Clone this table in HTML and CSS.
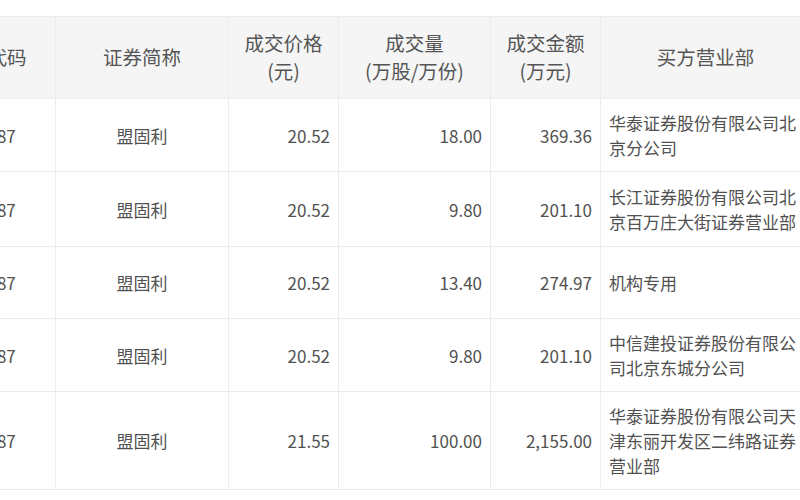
FILE: index.html
```html
<!DOCTYPE html>
<html lang="zh-CN">
<head>
<meta charset="utf-8">
<title>大宗交易</title>
<link rel="stylesheet" href="styles.css">
</head>
<body>
<table class="trades">
  <colgroup>
    <col class="c-code">
    <col class="c-name">
    <col class="c-price">
    <col class="c-vol">
    <col class="c-amt">
    <col class="c-buyer">
  </colgroup>
  <thead>
    <tr>
      <th>证券代码</th>
      <th>证券简称</th>
      <th>成交价格<br>(元)</th>
      <th>成交量<br>(万股/万份)</th>
      <th>成交金额<br>(万元)</th>
      <th>买方营业部</th>
    </tr>
  </thead>
  <tbody>
    <tr class="tight">
      <td class="code">301487</td>
      <td class="name">盟固利</td>
      <td class="num">20.52</td>
      <td class="num">18.00</td>
      <td class="num">369.36</td>
      <td class="buyer">华泰证券股份有限公司北京分公司</td>
    </tr>
    <tr>
      <td class="code">301487</td>
      <td class="name">盟固利</td>
      <td class="num">20.52</td>
      <td class="num">9.80</td>
      <td class="num">201.10</td>
      <td class="buyer">长江证券股份有限公司北京百万庄大街证券营业部</td>
    </tr>
    <tr>
      <td class="code">301487</td>
      <td class="name">盟固利</td>
      <td class="num">20.52</td>
      <td class="num">13.40</td>
      <td class="num">274.97</td>
      <td class="buyer">机构专用</td>
    </tr>
    <tr class="tight">
      <td class="code">301487</td>
      <td class="name">盟固利</td>
      <td class="num">20.52</td>
      <td class="num">9.80</td>
      <td class="num">201.10</td>
      <td class="buyer">中信建投证券股份有限公司北京东城分公司</td>
    </tr>
    <tr class="tight">
      <td class="code">301487</td>
      <td class="name">盟固利</td>
      <td class="num">21.55</td>
      <td class="num">100.00</td>
      <td class="num">2,155.00</td>
      <td class="buyer">华泰证券股份有限公司天津东丽开发区二纬路证券营业部</td>
    </tr>
  </tbody>
</table>
</body>
</html>
```
FILE: styles.css
```css
html, body {
  margin: 0;
  padding: 0;
  background: #ffffff;
  overflow: hidden;
}

body {
  padding-top: 16px;
  font-family: "Noto Sans CJK SC", "Noto Sans", sans-serif;
  color: #515151;
}

.trades {
  margin-left: -81px;
  border-collapse: collapse;
  table-layout: fixed;
  width: 891px;
}

.c-code { width: 136px; }
.c-name { width: 173px; }
.c-price { width: 110px; }
.c-vol { width: 152px; }
.c-amt { width: 110px; }
.c-buyer { width: 210px; }

.trades th,
.trades td {
  border: 1px solid #ececec;
}

.trades th {
  background: #f5f5f5;
  font-weight: normal;
  font-size: 19.5px;
  line-height: 28px;
  padding: 12px 4px 13px;
  height: 56px;
  color: #555555;
  text-align: center;
  white-space: nowrap;
}

.trades td {
  font-size: 17px;
  line-height: 25px;
  padding: 12px 8px;
  vertical-align: middle;
}

.trades tbody tr {
  height: 72px;
}

.trades tbody tr.tight td {
  padding: 11px 8px;
}

.code,
.name {
  text-align: center;
}

.num {
  text-align: right;
}

.buyer {
  text-align: left;
  word-break: break-all;
}
```
